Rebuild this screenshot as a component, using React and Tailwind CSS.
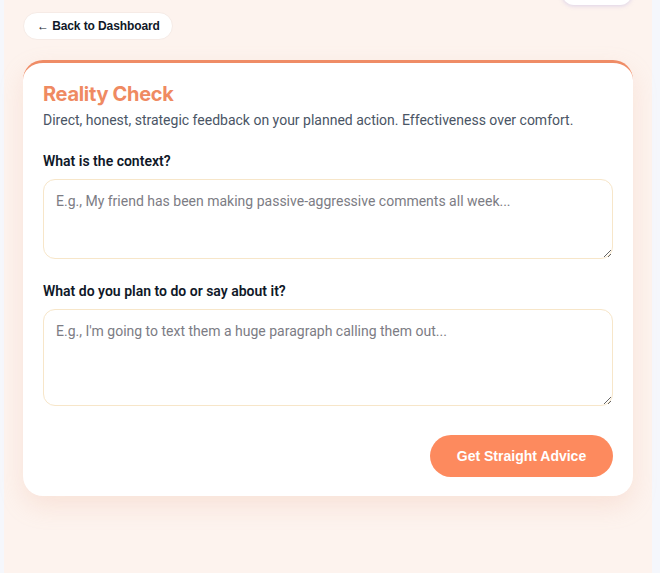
import React from 'react';

function TextArea({ placeholder, height }) {
  return (
    <textarea
      placeholder={placeholder}
      className={`block w-full ${height} mt-2 rounded-xl border border-[#f7e6c9] bg-white px-3 py-[11px] text-sm text-gray-800 placeholder:text-[#7c7c84] outline-none`}
    />
  );
}

export default function App() {
  return (
    <div
      className="min-h-screen flex bg-[#f5f7fc]"
      style={{ fontFamily: 'Roboto, "Noto Sans", sans-serif' }}
    >
      <div className="ml-1 mr-2 flex-1 min-h-[573px] bg-[#fdf3ee] pl-[19px] pr-[19px]">
        <div className="h-[5px] flex justify-end items-end pr-[1px]">
          <div className="w-[70px] h-[40px] shrink-0 bg-white rounded-xl shadow-[0_1px_4px_rgba(160,150,220,0.35)]" />
        </div>

        <button
          className="mt-[7px] h-[28px] pl-[13px] pr-[12px] rounded-full bg-white border border-[#f6ebe6] text-[12px] font-bold tracking-[-0.1px] text-gray-900"
          style={{ fontFamily: '"Liberation Sans", Arial, sans-serif' }}
        >
          ← Back to Dashboard
        </button>

        <div className="mt-[20px] w-[610px] bg-white rounded-[20px] border-t-[3px] border-[#ef8c66] shadow-[0_10px_24px_rgba(230,170,140,0.22)] px-5 pt-[17px] pb-[19px]">
          <h1
            className="text-xl leading-7 font-bold tracking-[-0.3px] text-[#ef8a62]"
            style={{ fontFamily: 'Inter, "Noto Sans", sans-serif' }}
          >
            Reality Check
          </h1>
          <p className="mt-[2px] text-sm leading-5 text-gray-600">
            Direct, honest, strategic feedback on your planned action. Effectiveness over comfort.
          </p>

          <label className="block mt-[21px] text-sm leading-5 font-semibold text-gray-900">
            What is the context?
          </label>
          <TextArea
            placeholder="E.g., My friend has been making passive-aggressive comments all week..."
            height="h-[80px]"
          />

          <label className="block mt-[22px] text-sm leading-5 font-semibold text-gray-900">
            What do you plan to do or say about it?
          </label>
          <TextArea
            placeholder="E.g., I'm going to text them a huge paragraph calling them out..."
            height="h-[97px]"
          />

          <div className="mt-[29px] flex justify-end">
            <button
              className="w-[183px] h-[42px] rounded-full bg-[#fd8a5e] text-white text-[14px] font-bold"
              style={{ fontFamily: '"Liberation Sans", Arial, sans-serif' }}
            >
              Get Straight Advice
            </button>
          </div>
        </div>
      </div>
    </div>
  );
}
